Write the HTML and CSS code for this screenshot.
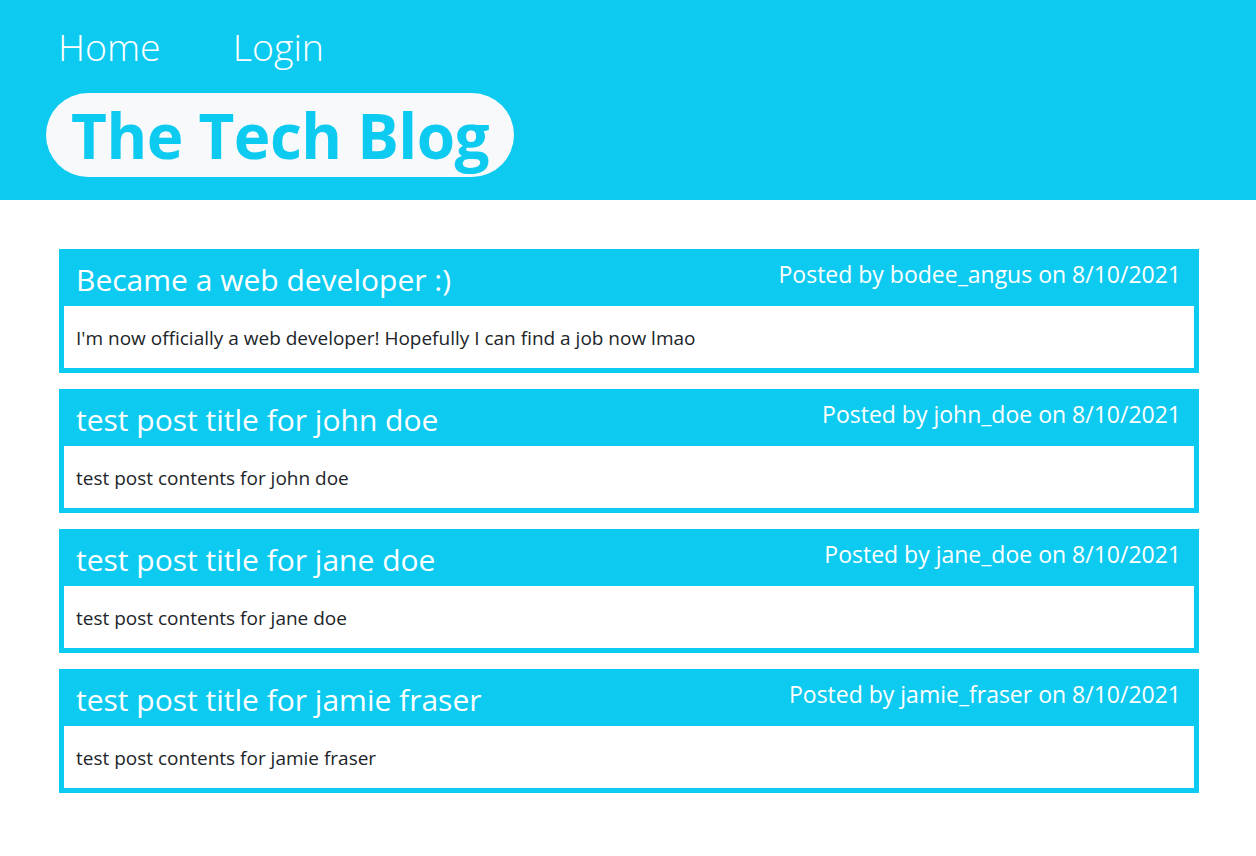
FILE: index.html
```html
<!DOCTYPE html>
<html lang="en">
<head>
<meta charset="utf-8">
<title>The Tech Blog</title>
<link rel="stylesheet" href="styles.css">
</head>
<body>
<header class="site-header">
  <nav class="nav">
    <a class="nav-link" href="#">Home</a>
    <a class="nav-link" href="#">Login</a>
  </nav>
  <div class="brand-wrap">
    <h1 class="brand">The Tech Blog</h1>
  </div>
</header>
<main class="posts">
  <article class="post">
    <div class="post-head">
      <h3 class="post-title">Became a web developer :)</h3>
      <span class="post-meta">Posted by bodee_angus on 8/10/2021</span>
    </div>
    <div class="post-body">I'm now officially a web developer! Hopefully I can find a job now lmao</div>
  </article>
  <article class="post">
    <div class="post-head">
      <h3 class="post-title">test post title for john doe</h3>
      <span class="post-meta">Posted by john_doe on 8/10/2021</span>
    </div>
    <div class="post-body">test post contents for john doe</div>
  </article>
  <article class="post">
    <div class="post-head">
      <h3 class="post-title">test post title for jane doe</h3>
      <span class="post-meta">Posted by jane_doe on 8/10/2021</span>
    </div>
    <div class="post-body">test post contents for jane doe</div>
  </article>
  <article class="post">
    <div class="post-head">
      <h3 class="post-title">test post title for jamie fraser</h3>
      <span class="post-meta">Posted by jamie_fraser on 8/10/2021</span>
    </div>
    <div class="post-body">test post contents for jamie fraser</div>
  </article>
</main>
</body>
</html>
```

FILE: styles.css
```css
* { box-sizing: border-box; }
html, body { margin: 0; padding: 0; }
body {
  font-family: "Open Sans", "Noto Sans", sans-serif;
  color: #212529;
  background: #fff;
}
.site-header {
  background: #0dcaf0;
  height: 200px;
  padding: 22px 0 0 46px;
}
.nav {
  display: flex;
  gap: 72px;
  padding-left: 12px;
}
.nav-link {
  color: #fff;
  text-decoration: none;
  font-size: 37.5px;
  font-weight: 300;
  line-height: 50px;
}
.brand-wrap {
  margin-top: 21px;
  display: flex;
}
.brand {
  margin: 0;
  background: #f8f9fa;
  color: #0dcaf0;
  border-radius: 42px;
  height: 84px;
  padding: 0 25px 0 25px;
  font-size: 62px;
  font-weight: 700;
  line-height: 84px;
  letter-spacing: -0.5px;
}
.posts {
  width: 1140px;
  margin: 49px 0 0 59px;
  display: flex;
  flex-direction: column;
  gap: 16px;
}
.post {
  border: 5px solid #0dcaf0;
}
.post-head {
  background: #0dcaf0;
  color: #fff;
  height: 52px;
  display: flex;
  justify-content: space-between;
  padding: 0 13px 0 12px;
}
.post-title {
  margin: 0;
  font-size: 30px;
  font-weight: 400;
  line-height: 52px;
}
.post-meta {
  font-size: 23px;
  line-height: 40px;
}
.post-body {
  height: 62px;
  padding: 0 12px;
  font-size: 19px;
  line-height: 64px;
}
```
